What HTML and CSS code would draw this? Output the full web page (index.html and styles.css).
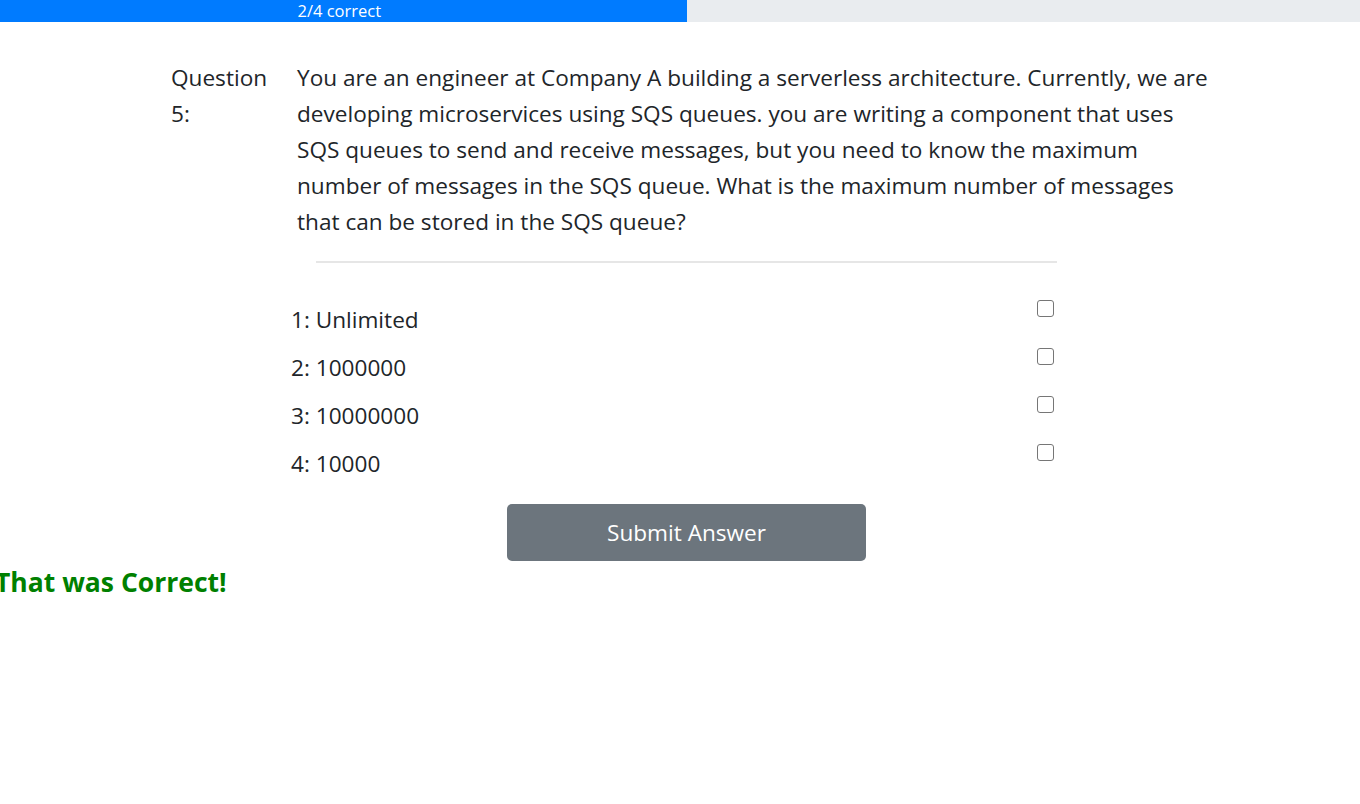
FILE: index.html
```html
<!DOCTYPE html>
<html lang="en">
<head>
<meta charset="utf-8">
<title>Quiz</title>
<link rel="stylesheet" href="styles.css">
</head>
<body>
<div class="page">
  <div class="progress">
    <div class="progress-bar" style="width:50%">2/4 correct</div>
  </div>
  <main class="quiz">
    <div class="question">
      <div class="q-label">Question 5:</div>
      <div class="q-text">You are an engineer at Company A building a serverless architecture. Currently, we are developing microservices using SQS queues. you are writing a component that uses SQS queues to send and receive messages, but you need to know the maximum number of messages in the SQS queue. What is the maximum number of messages that can be stored in the SQS queue?</div>
    </div>
    <hr class="divider">
    <ul class="options">
      <li class="option"><span class="opt-text">1: Unlimited</span><span class="check"></span></li>
      <li class="option"><span class="opt-text">2: 1000000</span><span class="check"></span></li>
      <li class="option"><span class="opt-text">3: 10000000</span><span class="check"></span></li>
      <li class="option"><span class="opt-text">4: 10000</span><span class="check"></span></li>
    </ul>
    <div class="actions">
      <button class="btn-submit" type="button">Submit Answer</button>
    </div>
  </main>
  <h3 class="result">That was Correct!</h3>
</div>
</body>
</html>
```

FILE: styles.css
```css
html, body {
  margin: 0;
  padding: 0;
  overflow-x: hidden;
  background: #fff;
}
body {
  font-family: "Open Sans", "Noto Sans", "Liberation Sans", sans-serif;
  color: #212529;
  font-size: 22.6px;
  line-height: 36px;
}
.page {
  width: 1373px;
}
.progress {
  height: 22px;
  background: #e9ecef;
  display: flex;
}
.progress-bar {
  background: #007bff;
  color: #fff;
  font-size: 16.5px;
  line-height: 22px;
  text-align: center;
  white-space: nowrap;
  box-sizing: border-box;
  padding-right: 8px;
}
.quiz {
  padding-top: 38px;
}
.question {
  display: flex;
  padding-left: 171px;
}
.q-label {
  width: 111px;
  flex: none;
}
.q-text {
  margin-left: 15px;
  width: 915px;
}
.divider {
  margin: 21px 0 0 316px;
  width: 741px;
  border: 0;
  border-top: 2px solid #e6e6e6;
  height: 0;
}
.options {
  list-style: none;
  margin: 39px 0 0 291px;
  padding: 0;
  width: 763px;
}
.option {
  display: flex;
  justify-content: space-between;
  align-items: flex-start;
  margin-bottom: 12px;
}
.check {
  width: 15px;
  height: 15px;
  border: 1.5px solid #767676;
  border-radius: 3px;
  margin-top: -2px;
  box-sizing: content-box;
}
.actions {
  display: flex;
  justify-content: center;
  padding-top: 10px;
}
.btn-submit {
  width: 359px;
  height: 57px;
  background: #6c757d;
  color: #fff;
  border: 0;
  border-radius: 5px;
  font-family: inherit;
  font-size: 22.6px;
  padding: 0;
}
.result {
  margin: 0 0 0 -5px;
  padding-top: 3px;
  color: #008000;
  font-size: 26.5px;
  font-weight: 700;
  line-height: 36px;
}
```
